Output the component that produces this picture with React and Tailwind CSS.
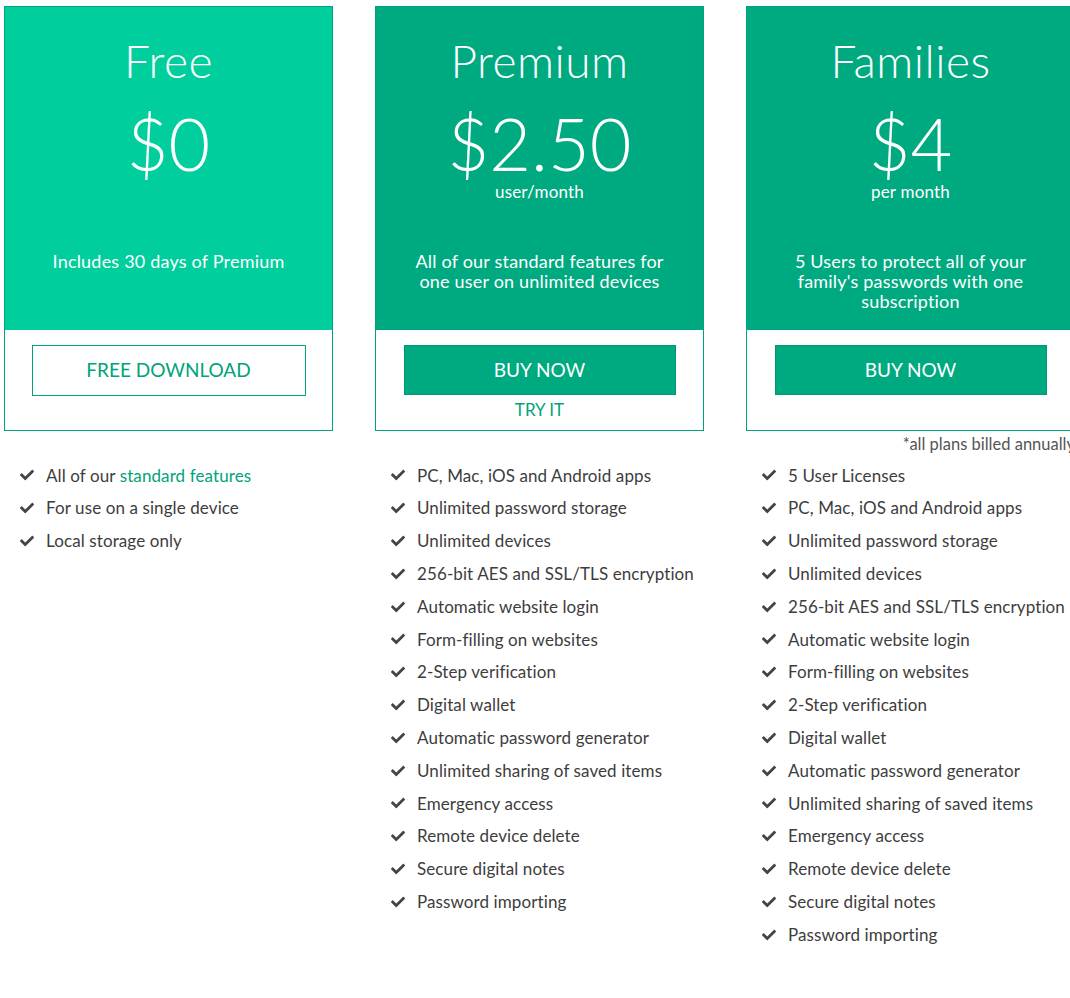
import React from 'react';
import { FaCheck } from 'react-icons/fa';

const plans = [
    {
        name: 'Free',
        price: '$0',
        sub: '',
        desc: ['Includes 30 days of Premium'],
        light: true,
        button: 'FREE DOWNLOAD',
        outline: true,
        features: [
            <>All of our <span className="text-[#00a37a]">standard features</span></>,
            'For use on a single device',
            'Local storage only',
        ],
    },
    {
        name: 'Premium',
        price: '$2.50',
        sub: 'user/month',
        desc: ['All of our standard features for', 'one user on unlimited devices'],
        button: 'BUY NOW',
        tryIt: true,
        features: [
            'PC, Mac, iOS and Android apps',
            'Unlimited password storage',
            'Unlimited devices',
            '256-bit AES and SSL/TLS encryption',
            'Automatic website login',
            'Form-filling on websites',
            '2-Step verification',
            'Digital wallet',
            'Automatic password generator',
            'Unlimited sharing of saved items',
            'Emergency access',
            'Remote device delete',
            'Secure digital notes',
            'Password importing',
        ],
    },
    {
        name: 'Families',
        price: '$4',
        sub: 'per month',
        desc: ['5 Users to protect all of your', "family's passwords with one", 'subscription'],
        button: 'BUY NOW',
        note: true,
        features: [
            '5 User Licenses',
            'PC, Mac, iOS and Android apps',
            'Unlimited password storage',
            'Unlimited devices',
            '256-bit AES and SSL/TLS encryption',
            'Automatic website login',
            'Form-filling on websites',
            '2-Step verification',
            'Digital wallet',
            'Automatic password generator',
            'Unlimited sharing of saved items',
            'Emergency access',
            'Remote device delete',
            'Secure digital notes',
            'Password importing',
        ],
    },
];

const PlanColumn = ({ plan }) => {
    return (
        <div className="w-[329px] shrink-0 flex flex-col">
            <div className="border border-[#00a37c] bg-white flex flex-col">
                <div className={`${plan.light ? 'bg-[#00cf9d]' : 'bg-[#00aa80]'} h-[323px] flex flex-col items-center text-white`}>
                    <div className="mt-[29px] h-[50px] leading-[50px] text-[46px] font-light tracking-[0.5px]">{plan.name}</div>
                    <div className="mt-[26px] h-[62px] leading-[62px] text-[72px] font-light">{plan.price}</div>
                    <div className="mt-[7px] h-[22px] leading-[22px] text-[17px] tracking-[0.2px]">{plan.sub}</div>
                    <div className="mt-[48px] text-center text-[18px] leading-[20px] tracking-[0.2px]">
                        {plan.desc.map((line, i) => (
                            <div key={i}>{line}</div>
                        ))}
                    </div>
                </div>
                <div className="h-[100px] flex flex-col items-center pt-[15px]">
                    {plan.outline ? (
                        <div className="w-[274px] h-[51px] border border-[#00a37c] text-[#00a37a] text-[19px] flex items-center justify-center">
                            {plan.button}
                        </div>
                    ) : (
                        <div className="w-[272px] h-[50px] bg-[#00aa80] border border-[#00996f] text-white text-[19px] flex items-center justify-center">
                            {plan.button}
                        </div>
                    )}
                    {plan.tryIt && (
                        <div className="mt-[5px] text-[17px] leading-[20px] text-[#00a37a]">TRY IT</div>
                    )}
                </div>
            </div>
            <div className="h-[26px] flex items-center justify-end text-[16.5px] text-[#555] whitespace-nowrap">
                {plan.note && '*all plans billed annually'}
            </div>
            <ul className="flex flex-col mt-[2px]">
                {plan.features.map((f, i) => (
                    <li key={i} className="h-[32.8px] flex items-center text-[17px] tracking-[0.1px] text-[#3d3d3d]">
                        <span className="w-[42px] pl-[16px] shrink-0 text-[#444]">
                            <FaCheck size={14} />
                        </span>
                        <span>{f}</span>
                    </li>
                ))}
            </ul>
        </div>
    );
};

export default function App() {
    return (
        <div className="w-[1070px] h-[998px] overflow-hidden bg-white font-['Lato',sans-serif]">
            <div className="flex gap-[42px] pl-[4px] pt-[6px]">
                {plans.map(p => (
                    <PlanColumn key={p.name} plan={p} />
                ))}
            </div>
        </div>
    );
}
